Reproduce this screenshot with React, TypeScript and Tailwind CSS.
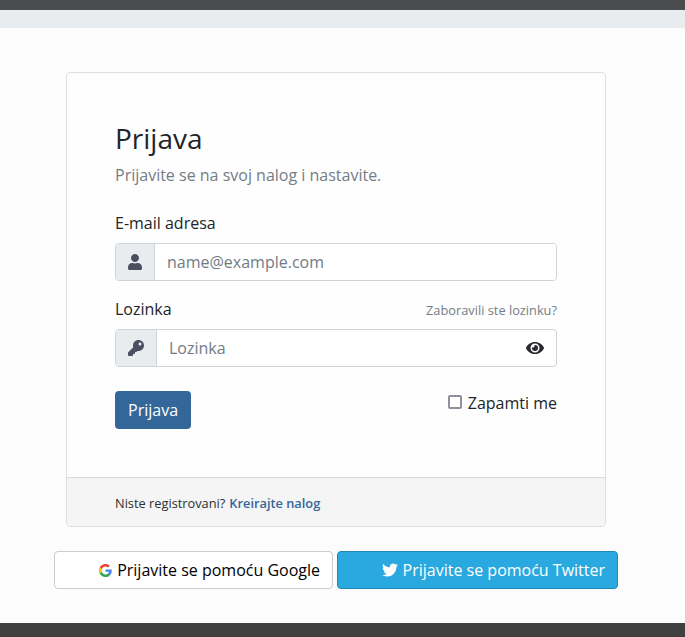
import React from 'react';
import { FaUser, FaKey, FaEye, FaTwitter } from 'react-icons/fa';

function GoogleLogo() {
  return (
    <svg viewBox="0 0 48 48" className="h-[13px] w-[13px] shrink-0" aria-hidden="true">
      <path fill="#EA4335" d="M24 9.5c3.54 0 6.71 1.22 9.21 3.6l6.85-6.85C35.9 2.38 30.47 0 24 0 14.62 0 6.51 5.38 2.56 13.22l7.98 6.19C12.43 13.72 17.74 9.5 24 9.5z" />
      <path fill="#4285F4" d="M46.98 24.55c0-1.57-.15-3.09-.38-4.55H24v9.02h12.94c-.58 2.96-2.26 5.48-4.78 7.18l7.73 6c4.51-4.18 7.09-10.36 7.09-17.65z" />
      <path fill="#FBBC05" d="M10.53 28.59c-.48-1.45-.76-2.99-.76-4.59s.27-3.14.76-4.59l-7.98-6.19C.92 16.46 0 20.12 0 24c0 3.88.92 7.54 2.56 10.78l7.97-6.19z" />
      <path fill="#34A853" d="M24 48c6.48 0 11.93-2.13 15.89-5.81l-7.73-6c-2.15 1.45-4.92 2.3-8.16 2.3-6.26 0-11.57-4.22-13.47-9.91l-7.98 6.19C6.51 42.62 14.62 48 24 48z" />
    </svg>
  );
}

type FieldProps = {
  icon: React.ReactNode;
  type: string;
  placeholder: string;
  trailing?: React.ReactNode;
};

function Field({ icon, type, placeholder, trailing }: FieldProps) {
  return (
    <div className="flex h-[38px] overflow-hidden rounded-[4px] border border-[#ced4da] bg-white">
      <span className="flex items-center border-r border-[#ced4da] bg-[#e9ecef] px-3 text-[#495060]">{icon}</span>
      <input
        type={type}
        placeholder={placeholder}
        className="min-w-0 flex-1 bg-white px-3 text-base text-[#495057] outline-none placeholder:text-[#727b85]"
      />
      {trailing}
    </div>
  );
}

export default function App() {
  return (
    <div className="flex h-[637px] w-full flex-col overflow-hidden bg-[#fcfcfc] font-['Open_Sans','Noto_Sans',sans-serif] text-base leading-6 text-[#212529]">
      <div className="h-[10px] shrink-0 bg-[#4b4c4d]" />
      <div className="h-[18px] shrink-0 bg-[#e9ecef]" />

      <main className="flex-1 pt-11">
        <section className="ml-[66px] flex h-[455px] w-[540px] flex-col overflow-hidden rounded-[4px] border border-[#dfdfdf] bg-[#fefefe]">
          <div className="flex-1 px-12 pt-12">
            <h1 className="mb-2 text-[28px] leading-[34px]">Prijava</h1>
            <p className="text-[#747d87]">Prijavite se na svoj nalog i nastavite.</p>

            <label className="mt-6 mb-2 block">E-mail adresa</label>
            <Field icon={<FaUser className="h-4 w-[14px]" />} type="email" placeholder="name@example.com" />

            <div className="mt-4 mb-2 flex items-center justify-between">
              <label>Lozinka</label>
              <a href="#" className="pt-[2px] text-[12.8px] leading-5 text-[#747d87]">Zaboravili ste lozinku?</a>
            </div>
            <Field
              icon={<FaKey className="h-4 w-4" />}
              type="password"
              placeholder="Lozinka"
              trailing={
                <button type="button" className="pr-3 text-[#2b2a2e]">
                  <FaEye className="h-4 w-[18px]" />
                </button>
              }
            />

            <div className="mt-6 flex items-start justify-between">
              <button type="button" className="h-[38px] rounded-[4px] bg-[#336699] px-[13px] text-white">Prijava</button>
              <label className="flex items-center gap-[6px]">
                <input type="checkbox" className="mb-[2px] h-[14px] w-[14px] appearance-none rounded-[2px] border-2 border-[#8f8f9d] bg-white" />
                Zapamti me
              </label>
            </div>
          </div>
          <footer className="flex h-[49px] gap-1 border-t border-[#d9d9d9] bg-[#f5f5f5] px-12 pt-[15px] text-[12.8px] leading-5 text-[#2b2f33]">
            <span>Niste registrovani?</span>
            <a href="#" className="font-semibold text-[#336699]">Kreirajte nalog</a>
          </footer>
        </section>

        <div className="mt-6 ml-[54px] flex gap-1">
          <button type="button" className="flex h-[38px] w-[279px] items-center justify-end gap-[5px] rounded-[4px] border border-[#cccccc] bg-white pr-3 whitespace-nowrap text-black">
            <GoogleLogo />
            Prijavite se pomoću Google
          </button>
          <button type="button" className="flex h-[38px] w-[281px] items-center justify-end gap-[5px] rounded-[4px] border border-[#2287b5] bg-[#2aa9e0] pr-3 whitespace-nowrap text-white">
            <FaTwitter className="h-4 w-4 shrink-0" />
            Prijavite se pomoću Twitter
          </button>
        </div>
      </main>

      <div className="h-[14px] shrink-0 bg-[#404040]" />
    </div>
  );
}
